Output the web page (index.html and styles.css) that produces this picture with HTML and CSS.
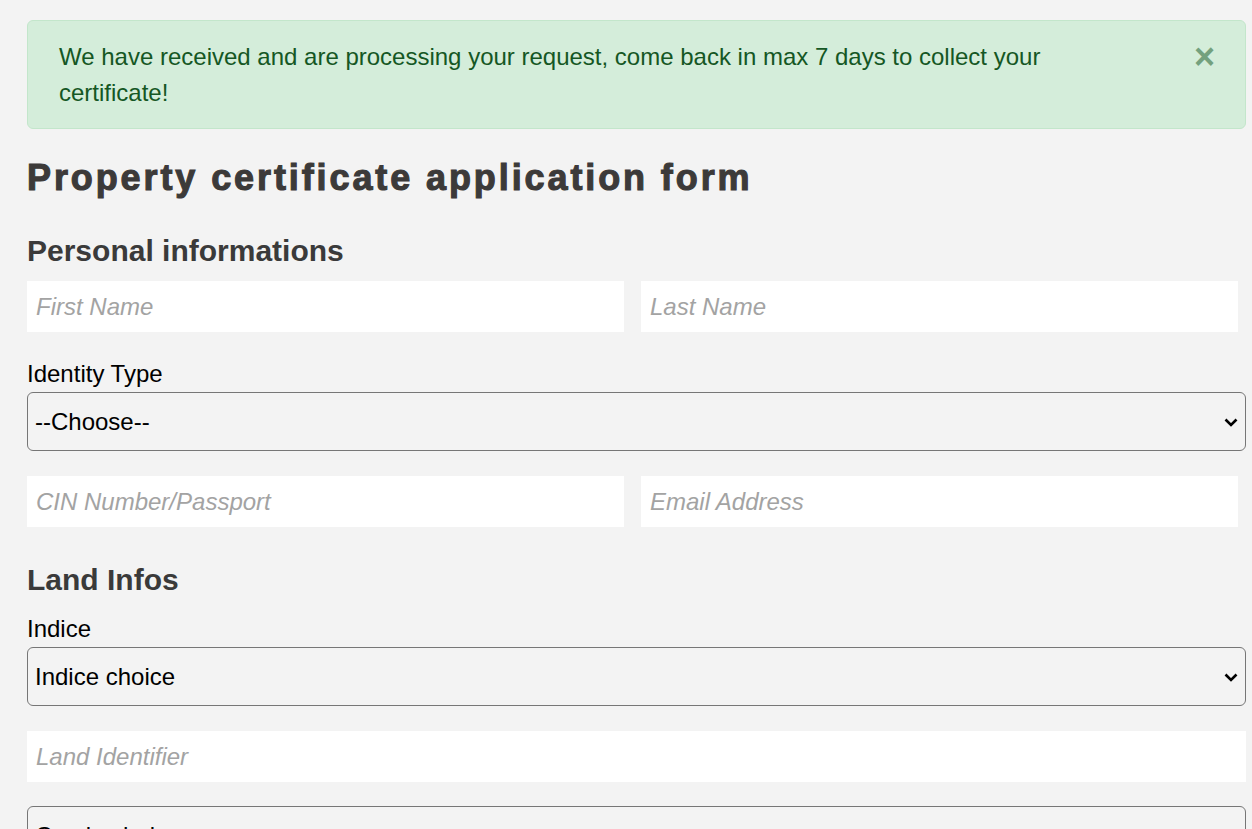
FILE: index.html
```html
<!DOCTYPE html>
<html lang="en">
<head>
<meta charset="utf-8">
<title>Property certificate application form</title>
<link rel="stylesheet" href="styles.css">
</head>
<body>
<div class="page">
  <div class="alert">
    <p class="alert-text">We have received and are processing your request, come back in max 7 days to collect your certificate!</p>
    <button class="close" type="button" aria-label="Close">&times;</button>
  </div>
  <h1 class="title">Property certificate application form</h1>
  <form class="form">
    <h2 class="section">Personal informations</h2>
    <div class="row row-first">
      <input class="field" type="text" placeholder="First Name">
      <input class="field" type="text" placeholder="Last Name">
    </div>
    <label class="label label-after-row">Identity Type</label>
    <select class="select">
      <option>--Choose--</option>
      <option>CIN</option>
      <option>Passport</option>
    </select>
    <div class="row row-next">
      <input class="field" type="text" placeholder="CIN Number/Passport">
      <input class="field" type="email" placeholder="Email Address">
    </div>
    <h2 class="section">Land Infos</h2>
    <label class="label label-after-heading">Indice</label>
    <select class="select">
      <option>Indice choice</option>
    </select>
    <input class="field field-full" type="text" placeholder="Land Identifier">
    <select class="select select-last">
      <option>Cercle choice</option>
    </select>
  </form>
</div>
</body>
</html>
```
FILE: styles.css
```css
html, body {
  margin: 0;
  padding: 0;
  background: #f3f3f3;
}

body {
  font-family: "Liberation Sans", Arial, sans-serif;
  font-size: 24px;
  color: #000;
}

.page {
  width: 1219px;
  margin-left: 27px;
  padding-top: 20px;
  padding-bottom: 40px;
}

.alert {
  display: flex;
  align-items: flex-start;
  padding: 18px 30px 17px 31px;
  background: #d4edda;
  border: 1px solid #c3e6cb;
  border-radius: 6px;
  color: #155724;
}

.alert-text {
  flex: 1;
  margin: 0;
  font-size: 24px;
  line-height: 36px;
}

.close {
  margin-left: 60px;
  padding: 0;
  border: 0;
  background: transparent;
  font-family: "Liberation Sans", Arial, sans-serif;
  font-size: 36px;
  font-weight: bold;
  line-height: 36px;
  color: #155724;
  opacity: 0.5;
  cursor: pointer;
}

.title {
  margin: 28px 0 0;
  font-size: 36px;
  line-height: 41px;
  font-weight: bold;
  letter-spacing: 2.9px;
  color: #3c3a39;
  -webkit-text-stroke: 1.1px #3c3a39;
}

.form {
  margin: 0;
}

.section {
  margin: 36px 0 0;
  font-size: 30px;
  line-height: 34px;
  font-weight: bold;
  color: #3a3a3a;
}

.row {
  display: flex;
  gap: 17px;
}

.row-first {
  margin-top: 13px;
}

.row-next {
  margin-top: 25px;
}

.row .field {
  width: 597px;
}

.field {
  display: block;
  box-sizing: border-box;
  height: 51px;
  margin: 0;
  padding: 0 9px;
  border: 0;
  background: #fff;
  font-family: "Liberation Sans", Arial, sans-serif;
  font-size: 24px;
  color: #000;
  outline: none;
}

.field::placeholder {
  font-style: italic;
  color: #a3a3a3;
}

.field-full {
  width: 100%;
  margin-top: 25px;
}

.label {
  display: block;
  font-size: 24px;
  line-height: 28px;
}

.label-after-row {
  margin-top: 28px;
}

.label-after-heading {
  margin-top: 18px;
}

.select {
  display: block;
  box-sizing: border-box;
  width: 100%;
  height: 59px;
  margin: 4px 0 0;
  padding: 0 3px 0 7px;
  border: 1px solid #767676;
  border-radius: 6px;
  -webkit-appearance: none;
  appearance: none;
  background-color: transparent;
  background-image: url("data:image/svg+xml,%3Csvg xmlns='http://www.w3.org/2000/svg' width='16' height='10' viewBox='0 0 16 10'%3E%3Cpath d='M2.5 2.5l5.5 5.5 5.5-5.5' fill='none' stroke='%23000' stroke-width='2.6'/%3E%3C/svg%3E");
  background-repeat: no-repeat;
  background-position: right 6px center;
  background-size: 16px 10px;
  font-family: "Liberation Sans", Arial, sans-serif;
  font-size: 24px;
  color: #000;
}

.select-last {
  margin-top: 24px;
}
```
